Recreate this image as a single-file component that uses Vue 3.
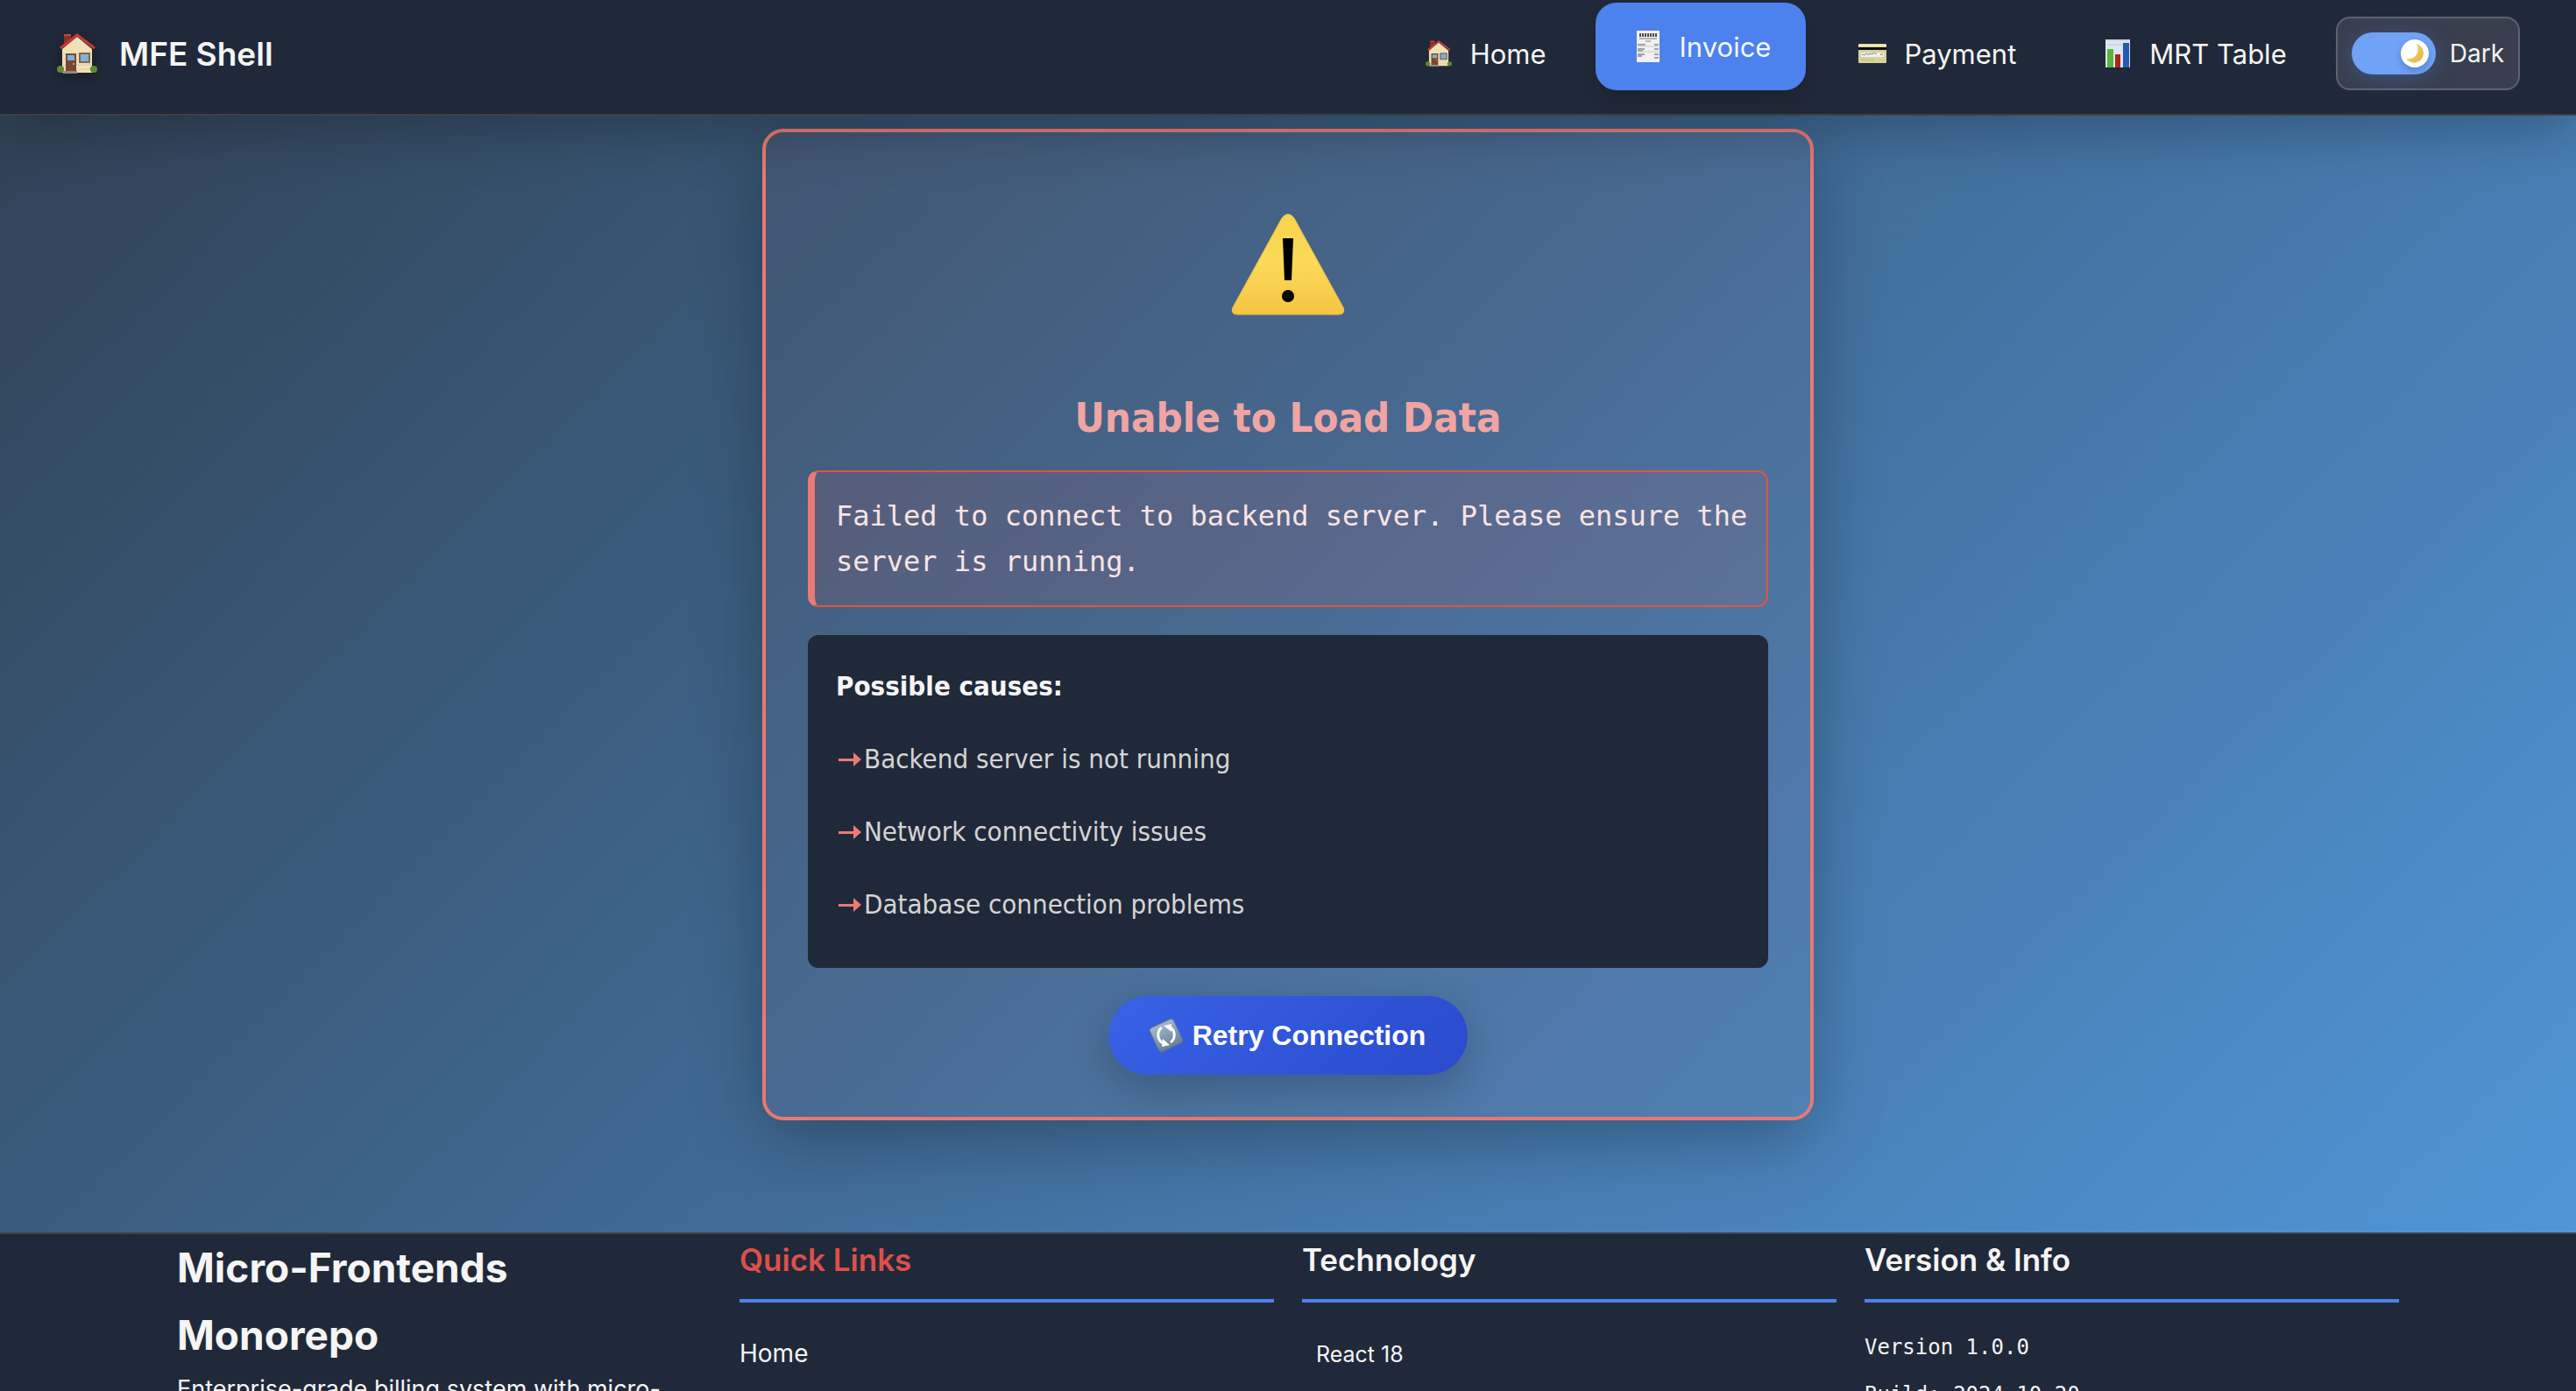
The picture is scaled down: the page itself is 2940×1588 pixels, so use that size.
<script setup>
import { ref } from 'vue'

const dark = ref(true)
const causes = [
  'Backend server is not running',
  'Network connectivity issues',
  'Database connection problems',
]
</script>

<template>
  <div class="app">
    <svg class="defs" aria-hidden="true">
      <defs>
        <linearGradient id="sign" x1="0" y1="0" x2="0" y2="1">
          <stop offset="0" stop-color="#f9d54e" />
          <stop offset="0.5" stop-color="#fad958" />
          <stop offset="1" stop-color="#f7c342" />
        </linearGradient>
        <linearGradient id="moon" x1="0" y1="0" x2="1" y2="1">
          <stop offset="0" stop-color="#f3dc7c" />
          <stop offset="1" stop-color="#e3b43c" />
        </linearGradient>
        <linearGradient id="tile" x1="0" y1="0" x2="0" y2="1">
          <stop offset="0" stop-color="#a3b8cc" />
          <stop offset="1" stop-color="#667f9a" />
        </linearGradient>
        <symbol id="house" viewBox="0 0 46 46">
          <path d="M8 1h8v10l-8 5z" fill="#8c2f28" />
          <path d="M8 1h8v2H8z" fill="#b94a40" />
          <path d="M6 18 23 4l17 14v27H6z" fill="#f1dfb6" />
          <path d="M7 24h32M7 30h32M7 36h32M7 41h32" stroke="#dfcb9e" stroke-width="1" />
          <path d="M4 17 23 2l20 15" fill="none" stroke="#c23b34" stroke-width="3" />
          <path d="M10 23h12v20H10z" fill="#7b4632" />
          <path d="M12 25h8v6h-8z" fill="#78b2e0" />
          <circle cx="19" cy="35" r="1" fill="#e8c25a" />
          <path d="M25 22h13v12H25z" fill="#80694b" />
          <path d="M27 24h9v8h-9z" fill="#7eb0e2" />
          <path d="M7 43h16v3H7z" fill="#8f8983" />
          <circle cx="4" cy="41" r="4" fill="#5c8a35" />
          <circle cx="42" cy="41" r="4" fill="#5c8a35" />
        </symbol>
      </defs>
    </svg>

    <header class="bar">
      <a class="brand" href="#">
        <svg class="brand-icon"><use href="#house" /></svg>
        <span>MFE Shell</span>
      </a>
      <nav class="nav">
        <a class="link" href="#home">
          <span class="glyph"><svg width="30" height="30"><use href="#house" /></svg></span>
          Home
        </a>
        <a class="link active" href="#invoice">
          <span class="glyph">
            <svg width="26" height="36" viewBox="0 0 26 36">
              <path d="M0 0h26v36H0z" fill="#f1f1f1" />
              <path d="M3 5h20" stroke="#4a4a4a" stroke-width="4" stroke-dasharray="2 1" />
              <path d="M3 9h20" stroke="#777" stroke-width="1" />
              <path d="M10 12h6" stroke="#888" stroke-width="1" />
              <path d="M1 16h9M1 21h8M1 23h6M1 27h8M1 29h5" stroke="#555" stroke-width="1" />
              <path d="M20 16h5M20 21h5M20 27h5M20 31h5" stroke="#555" stroke-width="1" />
              <path d="M1 18h24M1 24h24" stroke="#c9c9c9" stroke-width="1" />
            </svg>
          </span>
          Invoice
        </a>
        <a class="link" href="#payment">
          <span class="glyph">
            <svg width="32" height="22" viewBox="0 0 32 22">
              <rect width="32" height="22" rx="1" fill="#d9d29b" />
              <path d="M0 1h32v2H0z" fill="#efeab9" />
              <path d="M0 4h32v3H0z" fill="#0c0b06" />
              <path d="M3 10h26v5H3z" fill="#f1f1ea" />
              <path d="M4 13c2-3 2 2 4-1s2 2 4 0 3 1 5-1 2 2 4 0" fill="none" stroke="#4a74c4" stroke-width="1" />
              <path d="M25 12h3" stroke="#777" stroke-width="1" />
              <path d="M3 18h15" stroke="#bdb67d" stroke-width="1" />
            </svg>
          </span>
          Payment
        </a>
        <a class="link" href="#table">
          <span class="glyph">
            <svg width="28" height="32" viewBox="0 0 28 32">
              <path d="M0 0h28v32H0z" fill="#dde7ef" />
              <path d="M1 1h26M1 6h26" stroke="#b9c4cd" stroke-width="1" />
              <path d="M2 11h7v21H2z" fill="#55b63b" />
              <path d="M11 17h6v15h-6z" fill="#ad251b" />
              <path d="M20 4h7v28h-7z" fill="#2459b8" />
            </svg>
          </span>
          MRT Table
        </a>
        <label class="theme">
          <span class="switch">
            <input v-model="dark" type="checkbox" role="switch" />
            <svg class="moon" viewBox="0 0 32 32" aria-hidden="true">
              <path d="M18 5a11 11 0 1 1-12 17c9 2 17-6 12-17z" fill="url(#moon)" />
            </svg>
          </span>
          Dark
        </label>
      </nav>
    </header>

    <main class="page">
      <section class="card">
        <div class="warning">
          <svg width="130" height="116" viewBox="0 0 130 116" aria-hidden="true">
            <path d="M58 5q7-9 14 0l56 102q3 8-6 8H8q-9 0-6-8z" fill="url(#sign)" stroke="#f3bb45" stroke-width="1" />
            <path d="M59 28h12l-2 48h-8z" fill="#000" />
            <circle cx="65" cy="94" r="7" fill="#000" />
          </svg>
        </div>
        <h2 class="title">Unable to Load Data</h2>
        <p class="message">Failed to connect to backend server. Please ensure the server is running.</p>
        <div class="causes">
          <h3>Possible causes:</h3>
          <ul>
            <li v-for="cause in causes" :key="cause">
              <svg class="arrow" viewBox="0 0 32 20" aria-hidden="true">
                <path d="M3 9h17V2l9 8-9 8v-6H3z" fill="currentColor" />
              </svg>
              {{ cause }}
            </li>
          </ul>
        </div>
        <button class="retry" type="button">
          <svg width="40" height="40" viewBox="0 0 40 40" aria-hidden="true">
            <g transform="rotate(-25 20 20)">
              <rect x="5" y="5" width="30" height="30" rx="4" fill="url(#tile)" stroke="#5b7490" stroke-width="1" />
            </g>
            <path d="M17 29a9 10 0 0 1-2-18" fill="none" stroke="#fff" stroke-width="3" />
            <path d="M25 11a9 10 0 0 1 0 17" fill="none" stroke="#fff" stroke-width="3" />
            <path d="m17 9 9-2 0 9z" fill="#fff" />
            <path d="m24 31-9 2 1-9z" fill="#fff" />
          </svg>
          <span>Retry Connection</span>
        </button>
      </section>
    </main>

    <footer class="footer">
      <div class="columns">
        <div>
          <h2 class="name">Micro-Frontends Monorepo</h2>
          <p class="about">Enterprise-grade billing system with micro-</p>
        </div>
        <div>
          <h3 class="heading accent">Quick Links</h3>
          <ul class="links">
            <li><a href="#home">Home</a></li>
          </ul>
        </div>
        <div>
          <h3 class="heading">Technology</h3>
          <ul class="stack">
            <li>React 18</li>
          </ul>
        </div>
        <div>
          <h3 class="heading">Version &amp; Info</h3>
          <div class="info">
            <p>Version 1.0.0</p>
            <p>Build: 2024-10-20</p>
          </div>
        </div>
      </div>
    </footer>
  </div>
</template>

<style>
body {
  margin: 0;
  background: #202939;
}
</style>

<style scoped>
.app {
  display: flex;
  flex-direction: column;
  height: 100vh;
  overflow: hidden;
  background: linear-gradient(135deg, #304052, #5299dd);
  color: #f5f5f5;
  font-family: Inter, 'Liberation Sans', sans-serif;
}
.defs {
  position: absolute;
  width: 0;
  height: 0;
}
h2,
h3,
p,
ul {
  margin: 0;
  padding: 0;
}
ul {
  list-style: none;
}
a {
  color: inherit;
  text-decoration: none;
}

.bar {
  position: relative;
  z-index: 2;
  flex: none;
  display: flex;
  align-items: center;
  justify-content: space-between;
  padding: 11px 64px 19px;
  background: #202939;
  border-bottom: 2px solid #404040;
  box-shadow: 0 16px 64px rgba(0, 0, 0, 0.25);
}
.brand {
  display: flex;
  align-items: center;
  gap: 24px;
  font-size: 37px;
  font-weight: 600;
}
.brand-icon {
  width: 48px;
  height: 46px;
  filter: drop-shadow(0 4px 8px rgba(0, 0, 0, 0.3));
}
.nav {
  display: flex;
  align-items: center;
  gap: 16px;
}
.link {
  display: flex;
  align-items: center;
  gap: 16px;
  height: 100px;
  padding: 0 40px;
  border-radius: 24px;
  font-size: 31px;
  font-weight: 400;
}
.link.active {
  background: #4d81ee;
  transform: translateY(-8px);
  box-shadow: 0 16px 32px rgba(0, 0, 0, 0.15);
}
.glyph {
  display: flex;
  justify-content: center;
  width: 40px;
}
.theme {
  display: flex;
  align-items: center;
  gap: 16px;
  height: 80px;
  padding: 0 16px;
  border: 2px solid #5d6371;
  border-radius: 16px;
  background: #393f4e;
  font-size: 28px;
  font-weight: 400;
}
.switch {
  position: relative;
  display: flex;
}
.switch input {
  appearance: none;
  width: 96px;
  height: 48px;
  margin: 0;
  border-radius: 24px;
  background: #70a2f6;
  box-shadow: 0 4px 24px rgba(77, 129, 238, 0.3);
}
.moon {
  position: absolute;
  top: 8px;
  right: 8px;
  width: 32px;
  height: 32px;
  border-radius: 50%;
  background: #fff;
  box-shadow: 0 4px 8px rgba(0, 0, 0, 0.2);
  pointer-events: none;
}

.page {
  flex: none;
  display: flex;
  justify-content: center;
  padding: 15px 32px 128px;
  font-family: 'DejaVu Sans Condensed', 'Noto Sans', sans-serif;
}
.card {
  box-sizing: border-box;
  display: flex;
  flex-direction: column;
  align-items: center;
  width: 100%;
  max-width: 1200px;
  padding: 48px;
  border: 4px solid #e87972;
  border-radius: 24px;
  background: rgba(239, 120, 110, 0.05);
  box-shadow: 0 24px 80px rgba(0, 0, 0, 0.28);
}
.warning {
  display: flex;
  align-items: center;
  height: 206px;
  margin-bottom: 36px;
}
.title {
  margin-bottom: 24px;
  color: #f0a5a4;
  font-size: 47px;
  font-weight: 700;
  line-height: 72px;
}
.message {
  box-sizing: border-box;
  width: 100%;
  padding: 24px 20px 24px 24px;
  border: 2px solid #df5545;
  border-left: 8px solid #e97b74;
  border-radius: 12px;
  background: rgba(239, 90, 90, 0.1);
  color: #fae3e3;
  font-family: 'DejaVu Sans Mono', monospace;
  font-size: 32px;
  line-height: 52px;
}
.causes {
  box-sizing: border-box;
  width: 100%;
  margin: 32px 0;
  padding: 33px 32px 31px;
  border-radius: 12px;
  background: #202939;
  font-size: 31px;
  line-height: 51px;
}
.causes h3 {
  margin-bottom: 16px;
  font-size: 31px;
  font-weight: 700;
}
.causes li {
  display: flex;
  align-items: center;
  padding: 16px 0;
  color: #d4d4d4;
}
.arrow {
  width: 32px;
  height: 20px;
  color: #e97b74;
}
.retry {
  display: flex;
  align-items: center;
  gap: 10px;
  height: 90px;
  padding: 0 48px 0 46px;
  border: 0;
  border-radius: 45px;
  background: linear-gradient(135deg, #3862e6, #2a4acd);
  box-shadow: 0 16px 48px rgba(0, 0, 0, 0.2);
  color: #fff;
  font-family: 'Liberation Sans', Arial, sans-serif;
  font-size: 32px;
  font-weight: 700;
}

.footer {
  flex: none;
  border-top: 2px solid #404040;
  background: #202939;
}
.columns {
  display: grid;
  grid-template-columns: repeat(4, minmax(0, 1fr));
  gap: 32px;
  max-width: 2536px;
  margin: 0 auto;
  padding: 0 32px;
}
.name {
  font-size: 46px;
  font-weight: 700;
  line-height: 77px;
}
.about {
  font-size: 27px;
  line-height: 45px;
}
.heading {
  margin-bottom: 32px;
  padding-bottom: 16px;
  border-bottom: 4px solid #4d81ee;
  font-size: 35px;
  font-weight: 600;
  line-height: 58px;
}
.accent {
  color: #df4f4a;
}
.links {
  padding-top: 4px;
  font-size: 28px;
  line-height: 45px;
}
.stack {
  padding: 8px 16px;
  font-size: 25px;
  line-height: 38px;
}
.info {
  font-family: 'DejaVu Sans Mono', monospace;
  font-size: 24px;
  line-height: 38px;
}
.info p {
  margin-bottom: 16px;
}
</style>
